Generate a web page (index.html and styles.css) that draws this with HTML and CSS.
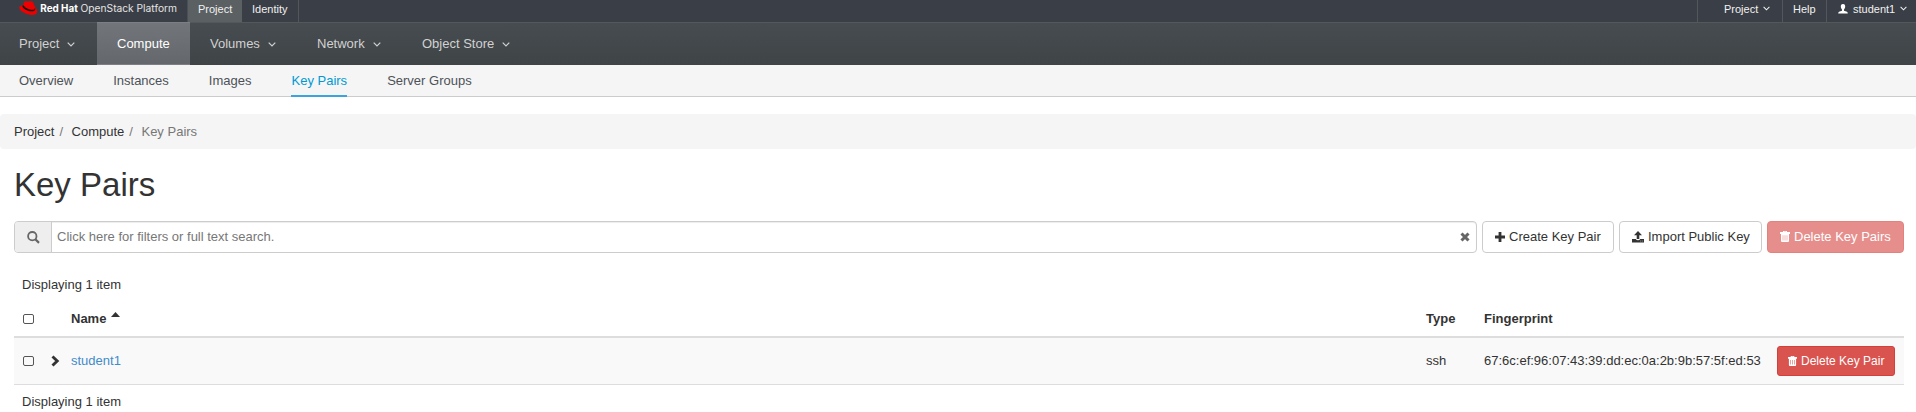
FILE: index.html
```html
<!DOCTYPE html>
<html lang="en">
<head>
<meta charset="utf-8">
<title>Key Pairs</title>
<link rel="stylesheet" href="styles.css">
</head>
<body>
<svg class="defs" aria-hidden="true">
  <symbol id="angle" viewBox="0 0 8 5"><path d="M.7.7 4 4 7.300.7" fill="none" stroke="currentColor" stroke-width="1.2"/></symbol>
  <symbol id="trash" viewBox="0 0 10 11"><path fill="currentColor" fill-rule="evenodd" d="M3 0h4v1h3v2H0V1h3zM4 .7V1h2V.7zM1 3h8v7q0 1-1 1H2q-1 0-1-1zM2.700 4.300v5.200h.6V4.300zM4.700 4.300v5.200h.6V4.300zM6.700 4.300v5.200h.6V4.300z"/></symbol>
</svg>
<header class="topbar">
  <a class="brand">
    <svg class="logo" width="158" height="22" viewBox="0 0 158 22">
      <path fill="#e00" d="M4.500 4 5.200 2Q6 .8 7.500 1.300q1.500.6 3 0Q13.500.900 14.300 2.700L15.800 6.500Q18.300 9 18.200 11.500 17.500 15.300 12.500 15 7 14.500 3.500 11.800 0 9.400.3 7.200.8 5.300 4 5.500z"/>
      <path fill="#111" d="M4 5Q6 8 10 9.200q4.500 1.300 5.600-.3l.5-1.300q.7 2.300-.7 3.200-2.500 1.300-7-.4Q3.800 8.500 3.400 6.500z"/>
      <text class="logo-bold" x="21.300" y="11.700" textLength="37.500" lengthAdjust="spacingAndGlyphs">Red Hat</text>
      <text class="logo-light" x="61.500" y="11.700" textLength="96.500" lengthAdjust="spacingAndGlyphs">OpenStack Platform</text>
    </svg>
  </a>
  <a class="tab active">Project</a>
  <a class="tab identity">Identity</a>
  <div class="account">
    <a class="acc project">Project<svg class="caret"><use href="#angle"/></svg></a>
    <a class="acc help">Help</a>
    <a class="acc user"><svg class="person" viewBox="0 0 10 10"><path fill="#fff" d="M5 0c1.700 0 2.300 1.200 2.200 2.800C7.100 4 6.600 5 6 5.500v1.200l3 1q.8.400.8 1.800H.2Q.2 8.100 1 7.700l3-1V5.500C3.400 5 2.900 4 2.800 2.800 2.700 1.200 3.300 0 5 0z"/></svg>student1<svg class="caret"><use href="#angle"/></svg></a>
  </div>
</header>
<nav class="mainnav">
  <a class="item project">Project<svg class="caret"><use href="#angle"/></svg></a>
  <a class="item compute">Compute</a>
  <a class="item volumes">Volumes<svg class="caret"><use href="#angle"/></svg></a>
  <a class="item network">Network<svg class="caret"><use href="#angle"/></svg></a>
  <a class="item store">Object Store<svg class="caret"><use href="#angle"/></svg></a>
</nav>
<nav class="subnav">
  <a>Overview</a><a>Instances</a><a>Images</a><a class="current">Key Pairs</a><a>Server Groups</a>
</nav>
<div class="breadcrumb"><a>Project</a><span class="sep">/</span><a>Compute</a><span class="sep">/</span><span>Key Pairs</span></div>
<main>
  <h1>Key Pairs</h1>
  <div class="toolbar">
    <div class="search">
      <span class="addon"><svg width="13" height="13" viewBox="0 0 13 13" fill="none" stroke="#666"><circle cx="5.300" cy="5.200" r="4.200" stroke-width="1.800"/><path d="m8.300 8.200 3.700 3.700" stroke-width="2.200"/></svg></span>
      <span class="field">Click here for filters or full text search.</span>
      <svg class="clear" width="10" height="10" viewBox="0 0 10 10"><path d="m1.500 1.500 7 7m0-7-7 7" stroke="#666" stroke-width="3"/></svg>
    </div>
    <a class="btn create"><svg width="10" height="10" viewBox="0 0 10 10"><path d="M5 0v10M0 5h10" stroke="#333" stroke-width="2.800"/></svg>Create Key Pair</a>
    <a class="btn import"><svg width="12" height="12" viewBox="0 0 12 12"><path fill="#333" d="M6 0 10 4.200H7.300V8H4.700V4.200H2zM0 8h3.800q.5 1.300 2.200 1.300T8.200 8H12v3.500H0z"/><path d="M8.300 10h.8m.8 0h.8" stroke="#ddd" stroke-width=".7"/></svg>Import Public Key</a>
    <a class="btn danger disabled"><svg width="10" height="11"><use href="#trash" width="10" height="11"/></svg>Delete Key Pairs</a>
  </div>
  <p class="count top">Displaying 1 item</p>
  <div class="row head">
    <span class="check"></span><span></span>
    <span>Name<svg class="sort" width="9" height="5" viewBox="0 0 9 5"><path d="M0 5 4.500 0 9 5z" fill="#333"/></svg></span>
    <span>Type</span><span>Fingerprint</span><span></span>
  </div>
  <div class="row body">
    <span class="check"></span>
    <svg class="expand" width="9" height="12" viewBox="0 0 9 12"><path d="m1.500 1.500 4.700 4.500-4.700 4.500" fill="none" stroke="#333" stroke-width="2.900"/></svg>
    <a class="link">student1</a><span>ssh</span><span>67:6c:ef:96:07:43:39:dd:ec:0a:2b:9b:57:5f:ed:53</span>
    <a class="btn danger small"><svg width="9" height="10"><use href="#trash" width="9" height="10"/></svg>Delete Key Pair</a>
  </div>
  <p class="count bottom">Displaying 1 item</p>
</main>
</body>
</html>
```

FILE: styles.css
```css
* { box-sizing: border-box; }
body { margin: 0; background: #fff; color: #333; font: 13px/18px "Liberation Sans", Arial, sans-serif; overflow: hidden; }
.defs { display: none; }
a { white-space: nowrap; }

.topbar { display: flex; height: 22px; background: #3a3e46; color: #f1f1f1; font-size: 11px; line-height: 18px; }
.brand { width: 188px; padding-left: 19px; border-right: 1px solid #4b5056; }
.logo { display: block; width: 158px; overflow: visible; }
.logo-bold { font: 700 10px Inter, sans-serif; fill: #fff; }
.logo-light { font: 400 10px Inter, sans-serif; fill: #e4e4e4; }
.tab { padding: 0 10px; }
.tab.active { width: 54px; background: #5b6063; }
.identity { width: 57px; border-right: 1px solid #53565b; }
.account { display: flex; margin-left: auto; }
.acc { border-left: 1px solid #53565b; }
.acc.project { width: 85px; padding-left: 26px; }
.acc.help { width: 44px; padding-left: 10px; }
.acc.user { width: 90px; padding-left: 11px; }
.acc .caret { width: 7px; height: 5px; margin-left: 5px; vertical-align: 2px; }
.person { width: 10px; height: 10px; margin-right: 5px; vertical-align: -1px; }

.mainnav { display: flex; height: 43px; border-top: 1px solid #54585a; background: linear-gradient(#474c50, #3f4447); color: #d1d1d1; line-height: 41px; }
.item.project { width: 97px; padding-left: 19px; }
.item.compute { width: 93px; margin-top: -1px; padding-left: 20px; border: solid #7c7f84; border-width: 1px 0; background: linear-gradient(#72757a, #64676c); color: #fff; }
.item.volumes { width: 107px; padding-left: 20px; }
.item.network { width: 105px; padding-left: 20px; }
.item.store { padding-left: 20px; }
.item .caret { width: 8px; height: 5px; margin-left: 8px; vertical-align: 1px; }

.subnav { display: flex; gap: 40px; height: 32px; padding-left: 19px; border-bottom: 1px solid #ccc; background: #f5f5f5; color: #4d5258; line-height: 32px; }
.subnav .current { height: 32px; border-bottom: 2px solid #39a5dc; color: #0099d3; }

.breadcrumb { height: 35px; margin-top: 17px; padding-left: 14px; border-radius: 4px; background: #f5f5f5; color: #777; line-height: 35px; }
.breadcrumb a { color: #333; }
.sep { padding: 0 8.500px 0 5px; }

main { padding: 0 12px 0 14px; }
h1 { margin: 17px 0 18px; font-size: 33px; font-weight: 400; line-height: 37px; }
.toolbar { display: flex; gap: 5px; height: 32px; }
.search { display: flex; flex: 1; align-items: center; border: 1px solid #ccc; border-radius: 4px; box-shadow: inset 0 1px 1px rgba(0, 0, 0, .075); overflow: hidden; }
.addon { display: flex; align-items: center; justify-content: center; width: 37px; height: 30px; border-right: 1px solid #ccc; background: #eee; }
.field { flex: 1; padding-left: 5px; color: #777; }
.clear { margin-right: 6px; }
.btn { display: flex; align-items: center; gap: 4px; height: 32px; padding-left: 12px; border: 1px solid #ccc; border-radius: 4px; }
.btn svg { margin-top: -1px; }
.create { width: 132px; }
.import { width: 143px; }
.danger { border-color: #d43f3a; background: #d9534f; color: #fff; }
.disabled { width: 137px; opacity: .65; }
.small { width: 118px; height: 30px; padding-left: 10px; border-radius: 3px; font-size: 12px; }

.count { margin: 0; padding-left: 8px; }
.count.top { margin-top: 23px; }
.count.bottom { margin-top: 8px; }
.row { display: grid; grid-template-columns: 29px 19px 1355px 58px 293px 118px; align-items: center; padding-left: 9px; }
.head { height: 44px; padding-top: 7px; border-bottom: 2px solid #ddd; font-weight: 700; }
.body { height: 47px; border-bottom: 1px solid #ddd; background: #f9f9f9; }
.check { width: 11px; height: 10px; border: 1px solid #555; border-radius: 2px; }
.expand { margin-left: -1px; }
.link { color: #428bca; }
.sort { margin-left: 5px; vertical-align: 6px; }
```
